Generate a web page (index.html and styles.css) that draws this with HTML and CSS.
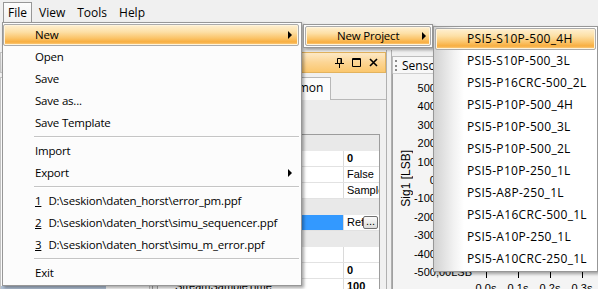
FILE: index.html
```html
<!DOCTYPE html>
<html lang="en">
<head>
  <meta charset="UTF-8" />
  <title>PSI5 Simulator</title>
  <link rel="stylesheet" href="styles.css">
</head>
<body>
<div id="app">
  <div id="menubar">
    <div class="menubar-item open">File</div>
    <div class="menubar-item">View</div>
    <div class="menubar-item">Tools</div>
    <div class="menubar-item">Help</div>
  </div>
  <div id="toolbar"></div>

  <div id="workspace">
    <!-- Project tree -->
    <div class="dock tree-dock">
      <div class="dock-title">Project</div>
      <div class="tree-body">
        <div class="tree-item">Sensors</div>
        <div class="tree-item selected">Sensor 1</div>
      </div>
    </div>

    <!-- Properties -->
    <div class="dock prop-dock">
      <div class="dock-title active">
        <span class="dock-caption">Properties</span>
        <span class="dock-buttons">
          <svg width="9" height="10" viewBox="0 0 9 10"><path d="M2.5 0.5h4v5h-4z M6 1v4.5" fill="none" stroke="#000"/><path d="M0 5.5h9M4.5 5.5V10" stroke="#000"/></svg>
          <svg width="9" height="9" viewBox="0 0 9 9"><path d="M0.5 0.5h8v8h-8z" fill="none" stroke="#000"/><path d="M0 1.5h9" stroke="#000"/></svg>
          <svg width="9" height="9" viewBox="0 0 9 9"><path d="M1 1l7 7M8 1l-7 7" stroke="#000" stroke-width="1.6"/></svg>
        </span>
      </div>
      <div class="tab-strip">
        <div class="tab">General</div>
        <div class="tab">Timing</div>
        <div class="tab active">Common</div>
      </div>
      <div class="grid-toolbar"></div>
      <div class="prop-grid">
        <div class="prop-row category"><span class="gutter"></span><span class="prop-name">Sensor</span><span class="prop-value"></span></div>
        <div class="prop-row"><span class="gutter"></span><span class="prop-name">Channel</span><span class="prop-value bold">0</span></div>
        <div class="prop-row"><span class="gutter"></span><span class="prop-name">Enabled</span><span class="prop-value">False</span></div>
        <div class="prop-row"><span class="gutter"></span><span class="prop-name">Mode</span><span class="prop-value">Sample</span></div>
        <div class="prop-row category"><span class="gutter"></span><span class="prop-name">Reference</span><span class="prop-value"></span></div>
        <div class="prop-row selected"><span class="gutter"></span><span class="prop-name">RefFile</span><span class="prop-value">Ref<span class="ellipsis">...</span></span></div>
        <div class="prop-row category"><span class="gutter"></span><span class="prop-name">Stream</span><span class="prop-value"></span></div>
        <div class="prop-row"><span class="gutter"></span><span class="prop-name">StreamName</span><span class="prop-value"></span></div>
        <div class="prop-row"><span class="gutter"></span><span class="prop-name">StreamOffset</span><span class="prop-value bold">0</span></div>
        <div class="prop-row"><span class="gutter"></span><span class="prop-name">StreamSampleTime</span><span class="prop-value bold">100</span></div>
      </div>
    </div>

    <div class="splitter"></div>

    <!-- Signal chart -->
    <div class="dock chart-dock">
      <div class="doc-tabs">
        <div class="doc-tab"><span class="grip"></span>Sensor 1</div>
      </div>
      <div class="chart">
        <div class="chart-main">
          <div class="y-title"><span>Sig1 [LSB]</span></div>
          <div class="y-labels">
            <span>500,00LSB</span>
            <span>400,00LSB</span>
            <span>300,00LSB</span>
            <span>200,00LSB</span>
            <span>100,00LSB</span>
            <span>0,00LSB</span>
            <span>-100,00LSB</span>
            <span>-200,00LSB</span>
            <span>-300,00LSB</span>
            <span>-400,00LSB</span>
            <span>-500,00LSB</span>
          </div>
          <div class="plot"></div>
        </div>
        <div class="x-axis">
          <div class="x-tick"><i></i><span>0.0s</span></div>
          <div class="x-tick"><i></i><span>0.1s</span></div>
          <div class="x-tick"><i></i><span>0.2s</span></div>
          <div class="x-tick"><i></i><span>0.3s</span></div>
        </div>
      </div>
    </div>
  </div>

  <!-- Open File menu -->
  <div class="menu file-menu">
    <div class="menu-item hot has-sub">New</div>
    <div class="menu-item">Open</div>
    <div class="menu-item">Save</div>
    <div class="menu-item">Save as...</div>
    <div class="menu-item">Save Template</div>
    <div class="menu-sep"></div>
    <div class="menu-item">Import</div>
    <div class="menu-item has-sub">Export</div>
    <div class="menu-sep"></div>
    <div class="menu-item"><u>1</u><span class="mru">D:\seskion\daten_horst\error_pm.ppf</span></div>
    <div class="menu-item"><u>2</u><span class="mru">D:\seskion\daten_horst\simu_sequencer.ppf</span></div>
    <div class="menu-item"><u>3</u><span class="mru">D:\seskion\daten_horst\simu_m_error.ppf</span></div>
    <div class="menu-sep"></div>
    <div class="menu-item">Exit</div>
  </div>

  <div class="menu new-menu">
    <div class="menu-item hot has-sub">New Project</div>
  </div>

  <div class="menu project-menu">
    <div class="menu-item hot">PSI5-S10P-500_4H</div>
    <div class="menu-item">PSI5-S10P-500_3L</div>
    <div class="menu-item">PSI5-P16CRC-500_2L</div>
    <div class="menu-item">PSI5-P10P-500_4H</div>
    <div class="menu-item">PSI5-P10P-500_3L</div>
    <div class="menu-item">PSI5-P10P-500_2L</div>
    <div class="menu-item">PSI5-P10P-250_1L</div>
    <div class="menu-item">PSI5-A8P-250_1L</div>
    <div class="menu-item">PSI5-A16CRC-500_1L</div>
    <div class="menu-item">PSI5-A10P-250_1L</div>
    <div class="menu-item">PSI5-A10CRC-250_1L</div>
  </div>
</div>
</body>
</html>
```

FILE: styles.css
```css
* {
  box-sizing: border-box;
}

body, html {
  margin: 0;
  padding: 0;
}

body {
  width: 598px;
  height: 289px;
  overflow: hidden;
  background-color: #f0f0f0;
  font-family: "Open Sans", sans-serif;
  font-size: 12px;
  color: #000;
}

#app {
  position: relative;
  height: 289px;
}

/* Menu bar */
#menubar {
  display: flex;
  height: 22px;
  padding: 2px 0 0 3px;
  gap: 2px;
}
.menubar-item {
  padding: 0 4px;
  line-height: 19px;
  border: 1px solid transparent;
  border-bottom: none;
}
.menubar-item.open {
  border-color: #979797;
  background: linear-gradient(#fdfdfd, #f1f1f1);
}

#toolbar {
  height: 28px;
}

/* Docking area */
#workspace {
  display: flex;
  height: 239px;
}
.dock {
  display: flex;
  flex-direction: column;
  overflow: hidden;
}
.dock-title {
  flex-shrink: 0;
  height: 21px;
  margin-top: 2px;
  padding: 0 6px;
  display: flex;
  align-items: center;
  border: 1px solid #c4c4c4;
  background: linear-gradient(#f6f6f6, #e2e2e2);
}
.dock-title.active {
  border-color: #e3b35e;
  background: linear-gradient(#fde9c6, #fcd594 50%, #fbc76e);
}
.dock-caption {
  flex: 1;
}
.dock-buttons {
  display: flex;
  align-items: center;
  gap: 8px;
  margin-right: 1px;
}

.tree-dock {
  width: 150px;
}
.tree-body {
  flex: 1;
  margin-top: 4px;
  border: 1px solid #c4c4c4;
  background-color: #fff;
  padding-top: 190px;
}
.tree-item {
  flex-shrink: 0;
  height: 18px;
  padding-left: 18px;
  line-height: 18px;
}
.tree-item.selected {
  width: 105px;
  background-color: #b3c3d8;
}

.prop-dock {
  width: 234px;
  margin-left: 2px;
}
.tab-strip {
  flex-shrink: 0;
  height: 27px;
  display: flex;
  align-items: flex-end;
  border-bottom: 1px solid #b8b8b8;
}
.tab {
  height: 21px;
  padding: 0 7px;
  line-height: 20px;
  border: 1px solid #b8b8b8;
  border-bottom: none;
  background: linear-gradient(#f2f2f2, #e2e2e2);
  margin-right: -1px;
}
.tab.active {
  height: 23px;
  background: #fcfcfc;
  position: relative;
  top: 1px;
}
.grid-toolbar {
  flex-shrink: 0;
  height: 34px;
  margin-right: 6px;
  background-color: #ececec;
}

.prop-grid {
  flex: 1;
  margin-right: 6px;
  border: 1px solid #9c9c9c;
  border-bottom: none;
  background-color: #fff;
  font-family: "Liberation Sans", Arial, sans-serif;
  font-size: 11px;
}
.prop-row {
  display: grid;
  grid-template-columns: 4px 1fr 36px;
  height: 16px;
  line-height: 15px;
  border-bottom: 1px solid #e2e2e2;
}
.gutter {
  background-color: #ececec;
}
.prop-name {
  padding-left: 17px;
  border-left: 1px solid #a8a8a8;
  white-space: nowrap;
  overflow: hidden;
}
.prop-value {
  padding-left: 3px;
  border-left: 1px solid #dadada;
  white-space: nowrap;
  overflow: hidden;
  position: relative;
}
.prop-value.bold {
  font-weight: bold;
}
.prop-row.category {
  background-color: #e9e9e9;
  border-bottom-color: #e9e9e9;
}
.prop-row.category .prop-value {
  border-left-color: transparent;
}
.prop-row.selected .prop-name {
  background-color: #3399ff;
  color: #fff;
}
.ellipsis {
  position: absolute;
  top: 1px;
  right: 1px;
  width: 15px;
  height: 13px;
  line-height: 8px;
  text-align: center;
  border: 1px solid #707070;
  border-radius: 2px;
  background: linear-gradient(#fafafa, #dcdcdc);
}

.splitter {
  width: 6px;
  border-left: 1px solid #b0b0b0;
  border-right: 1px solid #b0b0b0;
}

/* Chart document */
.chart-dock {
  flex: 1;
}
.doc-tabs {
  flex-shrink: 0;
  height: 23px;
  display: flex;
  align-items: flex-end;
}
.doc-tab {
  height: 17px;
  display: flex;
  align-items: center;
  gap: 5px;
  padding: 0 8px 0 2px;
  border: 1px solid #bdbdbd;
  border-bottom: none;
  background-color: #f8f8f8;
}
.grip {
  height: 11px;
  border-left: 2px dotted #8a8a8a;
}
.chart {
  flex: 1;
  display: flex;
  flex-direction: column;
  border-left: 1px solid #a0a0a0;
  border-top: 1px solid #d0d0d0;
  background-color: #f4f4f4;
  font-family: "Liberation Sans", Arial, sans-serif;
  font-size: 11px;
}
.chart-main {
  flex-shrink: 0;
  height: 198px;
  display: flex;
}
.y-title {
  width: 25px;
  padding-top: 10px;
  display: flex;
  align-items: center;
  justify-content: center;
  font-size: 12px;
}
.y-title span {
  writing-mode: vertical-rl;
  transform: rotate(180deg);
  white-space: nowrap;
}
.y-labels {
  width: 54px;
  padding-top: 5px;
  display: flex;
  flex-direction: column;
  align-items: flex-end;
  line-height: 18.4px;
  white-space: nowrap;
}
.y-labels span {
  flex-shrink: 0;
}
.plot {
  flex: 1;
}
.x-axis {
  flex-shrink: 0;
  display: flex;
  padding-left: 77px;
}
.x-tick {
  width: 33.3px;
  display: flex;
  flex-direction: column;
  align-items: center;
}
.x-tick i {
  width: 1px;
  height: 6px;
  background-color: #000;
}
.x-tick span {
  margin-top: 4px;
  line-height: 12px;
}

/* Drop-down menus */
.menu {
  position: absolute;
  border: 1px solid #979797;
  background-color: #fcfcfc;
  box-shadow: 2px 2px 3px rgba(0, 0, 0, 0.35);
  font-size: 11.5px;
  letter-spacing: -0.2px;
}
.file-menu {
  left: 2px;
  top: 22px;
  width: 300px;
  padding: 1px 2px 1px 0;
}
.new-menu {
  left: 303px;
  top: 24px;
  width: 130px;
  padding: 1px;
}
.project-menu {
  left: 433px;
  top: 26px;
  width: 165px;
  padding: 1px;
  font-size: 12px;
  letter-spacing: 0.3px;
  background: linear-gradient(to right, #d2d2d2, #f2f2f2 20px, #fff 30px);
}
.menu-item {
  position: relative;
  height: 22px;
  line-height: 19px;
  padding-left: 31px;
  border: 1px solid transparent;
  white-space: nowrap;
}
.project-menu .menu-item {
  line-height: 20px;
}
.new-menu .menu-item {
  height: 20px;
  line-height: 17px;
  padding-left: 31px;
}
.menu-item.hot {
  border-color: #ababab;
  border-radius: 2px;
  box-shadow: inset 0 0 0 1px #fff4dc;
  background: linear-gradient(#fff0d2, #fde0a6 35%, #fbc56b 65%, #f8ae40 85%, #fcd28d);
}
.menu-item.has-sub::after {
  content: "";
  position: absolute;
  right: 6px;
  top: 6px;
  border-left: 4px solid #000;
  border-top: 4px solid transparent;
  border-bottom: 4px solid transparent;
}
.new-menu .menu-item.has-sub::after {
  top: 5px;
  right: 4px;
}
.mru {
  margin-left: 7px;
}
.menu-sep {
  box-sizing: content-box;
  height: 1px;
  margin: 2px 0 2px 31px;
  background-color: #c5c5c5;
  border-bottom: 1px solid #fff;
}
```
